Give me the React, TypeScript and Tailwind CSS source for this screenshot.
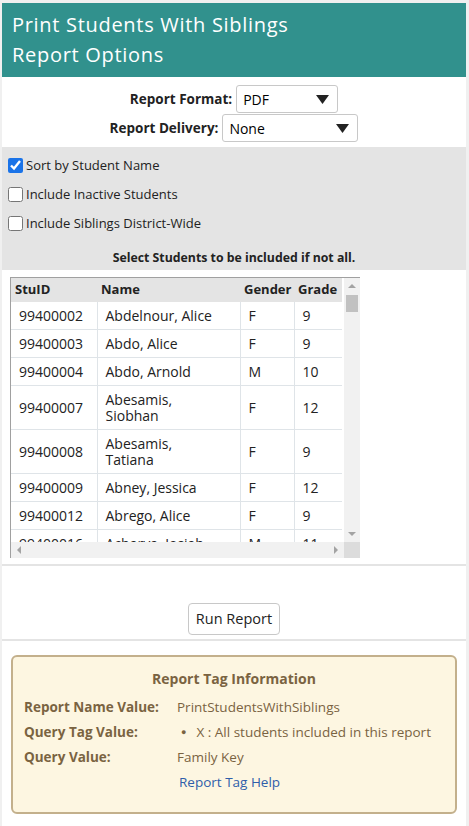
import { useState } from "react";

const students = [
  { id: "99400002", name: "Abdelnour, Alice", gender: "F", grade: "9" },
  { id: "99400003", name: "Abdo, Alice", gender: "F", grade: "9" },
  { id: "99400004", name: "Abdo, Arnold", gender: "M", grade: "10" },
  { id: "99400007", name: "Abesamis, Siobhan", gender: "F", grade: "12" },
  { id: "99400008", name: "Abesamis, Tatiana", gender: "F", grade: "9" },
  { id: "99400009", name: "Abney, Jessica", gender: "F", grade: "12" },
  { id: "99400012", name: "Abrego, Alice", gender: "F", grade: "9" },
  { id: "99400016", name: "Acharya, Josiah", gender: "M", grade: "11" },
];

function FakeSelect({ value, width }: { value: string; width: string }) {
  return (
    <div
      className={`${width} h-[28px] flex items-center justify-between bg-white border border-[#c8c8c8] rounded-[3px] pl-[6px] pr-[8px] text-[14px] text-black`}
    >
      <span>{value}</span>
      <svg width="13" height="9" viewBox="0 0 13 9">
        <path d="M0 0 L13 0 L6.5 9 Z" fill="#222" />
      </svg>
    </div>
  );
}

function Arrow({ dir }: { dir: "up" | "down" | "left" | "right" }) {
  const d = {
    up: "M0 4 L4 0 L8 4 Z",
    down: "M0 0 L8 0 L4 4 Z",
    left: "M4 0 L4 8 L0 4 Z",
    right: "M0 0 L4 4 L0 8 Z",
  }[dir];
  const vertical = dir === "up" || dir === "down";
  return (
    <svg width={vertical ? 8 : 4} height={vertical ? 4 : 8} viewBox={vertical ? "0 0 8 4" : "0 0 4 8"}>
      <path d={d} fill="#a3a3a3" />
    </svg>
  );
}

export default function App() {
  const [sortByName, setSortByName] = useState(true);
  const [inactive, setInactive] = useState(false);
  const [districtWide, setDistrictWide] = useState(false);

  return (
    <div className="min-h-[826px] bg-[#f0f0f0] pt-[3px] pl-[2px] pr-[3px] font-['Open_Sans','Noto_Sans',sans-serif] text-[#222]">
      <div className="bg-white min-h-[823px]">
        <div className="bg-[#31918d] px-[10px] pt-[7px] pb-[7px]">
          <h1 className="text-white text-[20px] leading-[30px] tracking-[0.7px]">
            Print Students With Siblings
            <br />
            Report Options
          </h1>
        </div>

        <div className="pt-[8px] pb-[5px] flex flex-col items-center gap-[1px]">
          <div className="flex items-center gap-[4px]">
            <span className="font-bold text-[13.5px]">Report Format:</span>
            <FakeSelect value="PDF" width="w-[102px]" />
          </div>
          <div className="flex items-center gap-[4px]">
            <span className="font-bold text-[13.5px]">Report Delivery:</span>
            <FakeSelect value="None" width="w-[136px]" />
          </div>
        </div>

        <div className="bg-[#e4e4e4] pt-[4px] pb-[3px] px-[6px] text-[13px]">
          <label className="flex items-center h-[29px]">
            <input
              type="checkbox"
              checked={sortByName}
              onChange={(e) => setSortByName(e.target.checked)}
              className="w-[15px] h-[15px] m-0 mr-[3px] accent-[#1a73e8]"
            />
            Sort by Student Name
          </label>
          <label className="flex items-center h-[29px]">
            <input
              type="checkbox"
              checked={inactive}
              onChange={(e) => setInactive(e.target.checked)}
              className="w-[15px] h-[15px] m-0 mr-[3px]"
            />
            Include Inactive Students
          </label>
          <label className="flex items-center h-[29px]">
            <input
              type="checkbox"
              checked={districtWide}
              onChange={(e) => setDistrictWide(e.target.checked)}
              className="w-[15px] h-[15px] m-0 mr-[3px]"
            />
            Include Siblings District-Wide
          </label>
          <p className="text-center font-bold text-[12.3px] mt-[11px] leading-[18px]">
            Select Students to be included if not all.
          </p>
        </div>

        <div className="pt-[7px] pb-[6px] pl-[8px] border-b-2 border-[#e4e4e4]">
          <div className="w-[350px] h-[281px] flex flex-col border-l border-t border-[#a0a0a0] bg-white">
            <div className="flex flex-1 min-h-0">
              <div className="flex-1 overflow-hidden">
                <table className="w-[331px] border-collapse text-[14px] table-fixed">
                  <colgroup>
                    <col className="w-[86px]" />
                    <col className="w-[143px]" />
                    <col className="w-[54px]" />
                    <col className="w-[48px]" />
                  </colgroup>
                  <thead>
                    <tr className="bg-[#e4e4e4] h-[24px] text-[13px] text-left">
                      <th className="pl-[4px] font-bold">StuID</th>
                      <th className="pl-[4px] font-bold">Name</th>
                      <th className="pl-[4px] font-bold">Gender</th>
                      <th className="pl-[4px] font-bold">Grade</th>
                    </tr>
                  </thead>
                  <tbody>
                    {students.map((s) => (
                      <tr key={s.id} className="border-b border-[#dfe4e8]">
                        <td className="pl-[8px] pt-[6px] pb-[5px] leading-[16px] border-r border-[#dfe4e8]">{s.id}</td>
                        <td className="pl-[8px] pr-[20px] pt-[6px] pb-[5px] leading-[16px] border-r border-[#dfe4e8]">{s.name}</td>
                        <td className="pl-[8px] pt-[6px] pb-[5px] leading-[16px] border-r border-[#dfe4e8]">{s.gender}</td>
                        <td className="pl-[8px] pt-[6px] pb-[5px] leading-[16px]">{s.grade}</td>
                      </tr>
                    ))}
                  </tbody>
                </table>
              </div>
              <div className="w-[16px] bg-[#f1f1f1] flex flex-col items-center">
                <div className="h-[16px] flex items-center justify-center">
                  <Arrow dir="up" />
                </div>
                <div className="w-[12px] h-[17px] bg-[#c1c1c1] mt-[1px]" />
                <div className="flex-1" />
                <div className="h-[16px] flex items-center justify-center">
                  <Arrow dir="down" />
                </div>
              </div>
            </div>
            <div className="h-[16px] flex bg-[#f1f1f1]">
              <div className="flex-1 flex items-center justify-between px-[6px]">
                <Arrow dir="left" />
                <Arrow dir="right" />
              </div>
              <div className="w-[16px] bg-[#dcdcdc]" />
            </div>
          </div>
        </div>

        <div className="h-[75px] flex items-end justify-center pb-[4px] border-b-2 border-[#e4e4e4]">
          <button className="h-[32px] px-[7px] bg-white border border-[#c8c8c8] rounded-[4px] text-[14.5px] text-[#222]">
            Run Report
          </button>
        </div>

        <div className="pt-[14px] px-[9px] pb-[12px]">
          <div className="bg-[#fdf6e1] border-2 border-[#c3b08c] rounded-[6px] pt-[11px] pb-[21px] px-[11px] text-[#7a6341] text-[13.5px]">
            <h2 className="text-center font-bold text-[14px] leading-[22px] mb-[8px]">
              Report Tag Information
            </h2>
            <div className="grid grid-cols-[153px_1fr] gap-y-[7px] leading-[18px]">
              <span className="font-bold">Report Name Value:</span>
              <span>PrintStudentsWithSiblings</span>
              <span className="font-bold">Query Tag Value:</span>
              <span className="flex items-center">
                <span className="ml-[4px] mr-[10px] text-[9px]">●</span>X : All students included in this report
              </span>
              <span className="font-bold">Query Value:</span>
              <span>Family Key</span>
              <span />
              <a href="#" className="text-[#2f5eaa] ml-[2px]">Report Tag Help</a>
            </div>
          </div>
        </div>
      </div>
    </div>
  );
}
